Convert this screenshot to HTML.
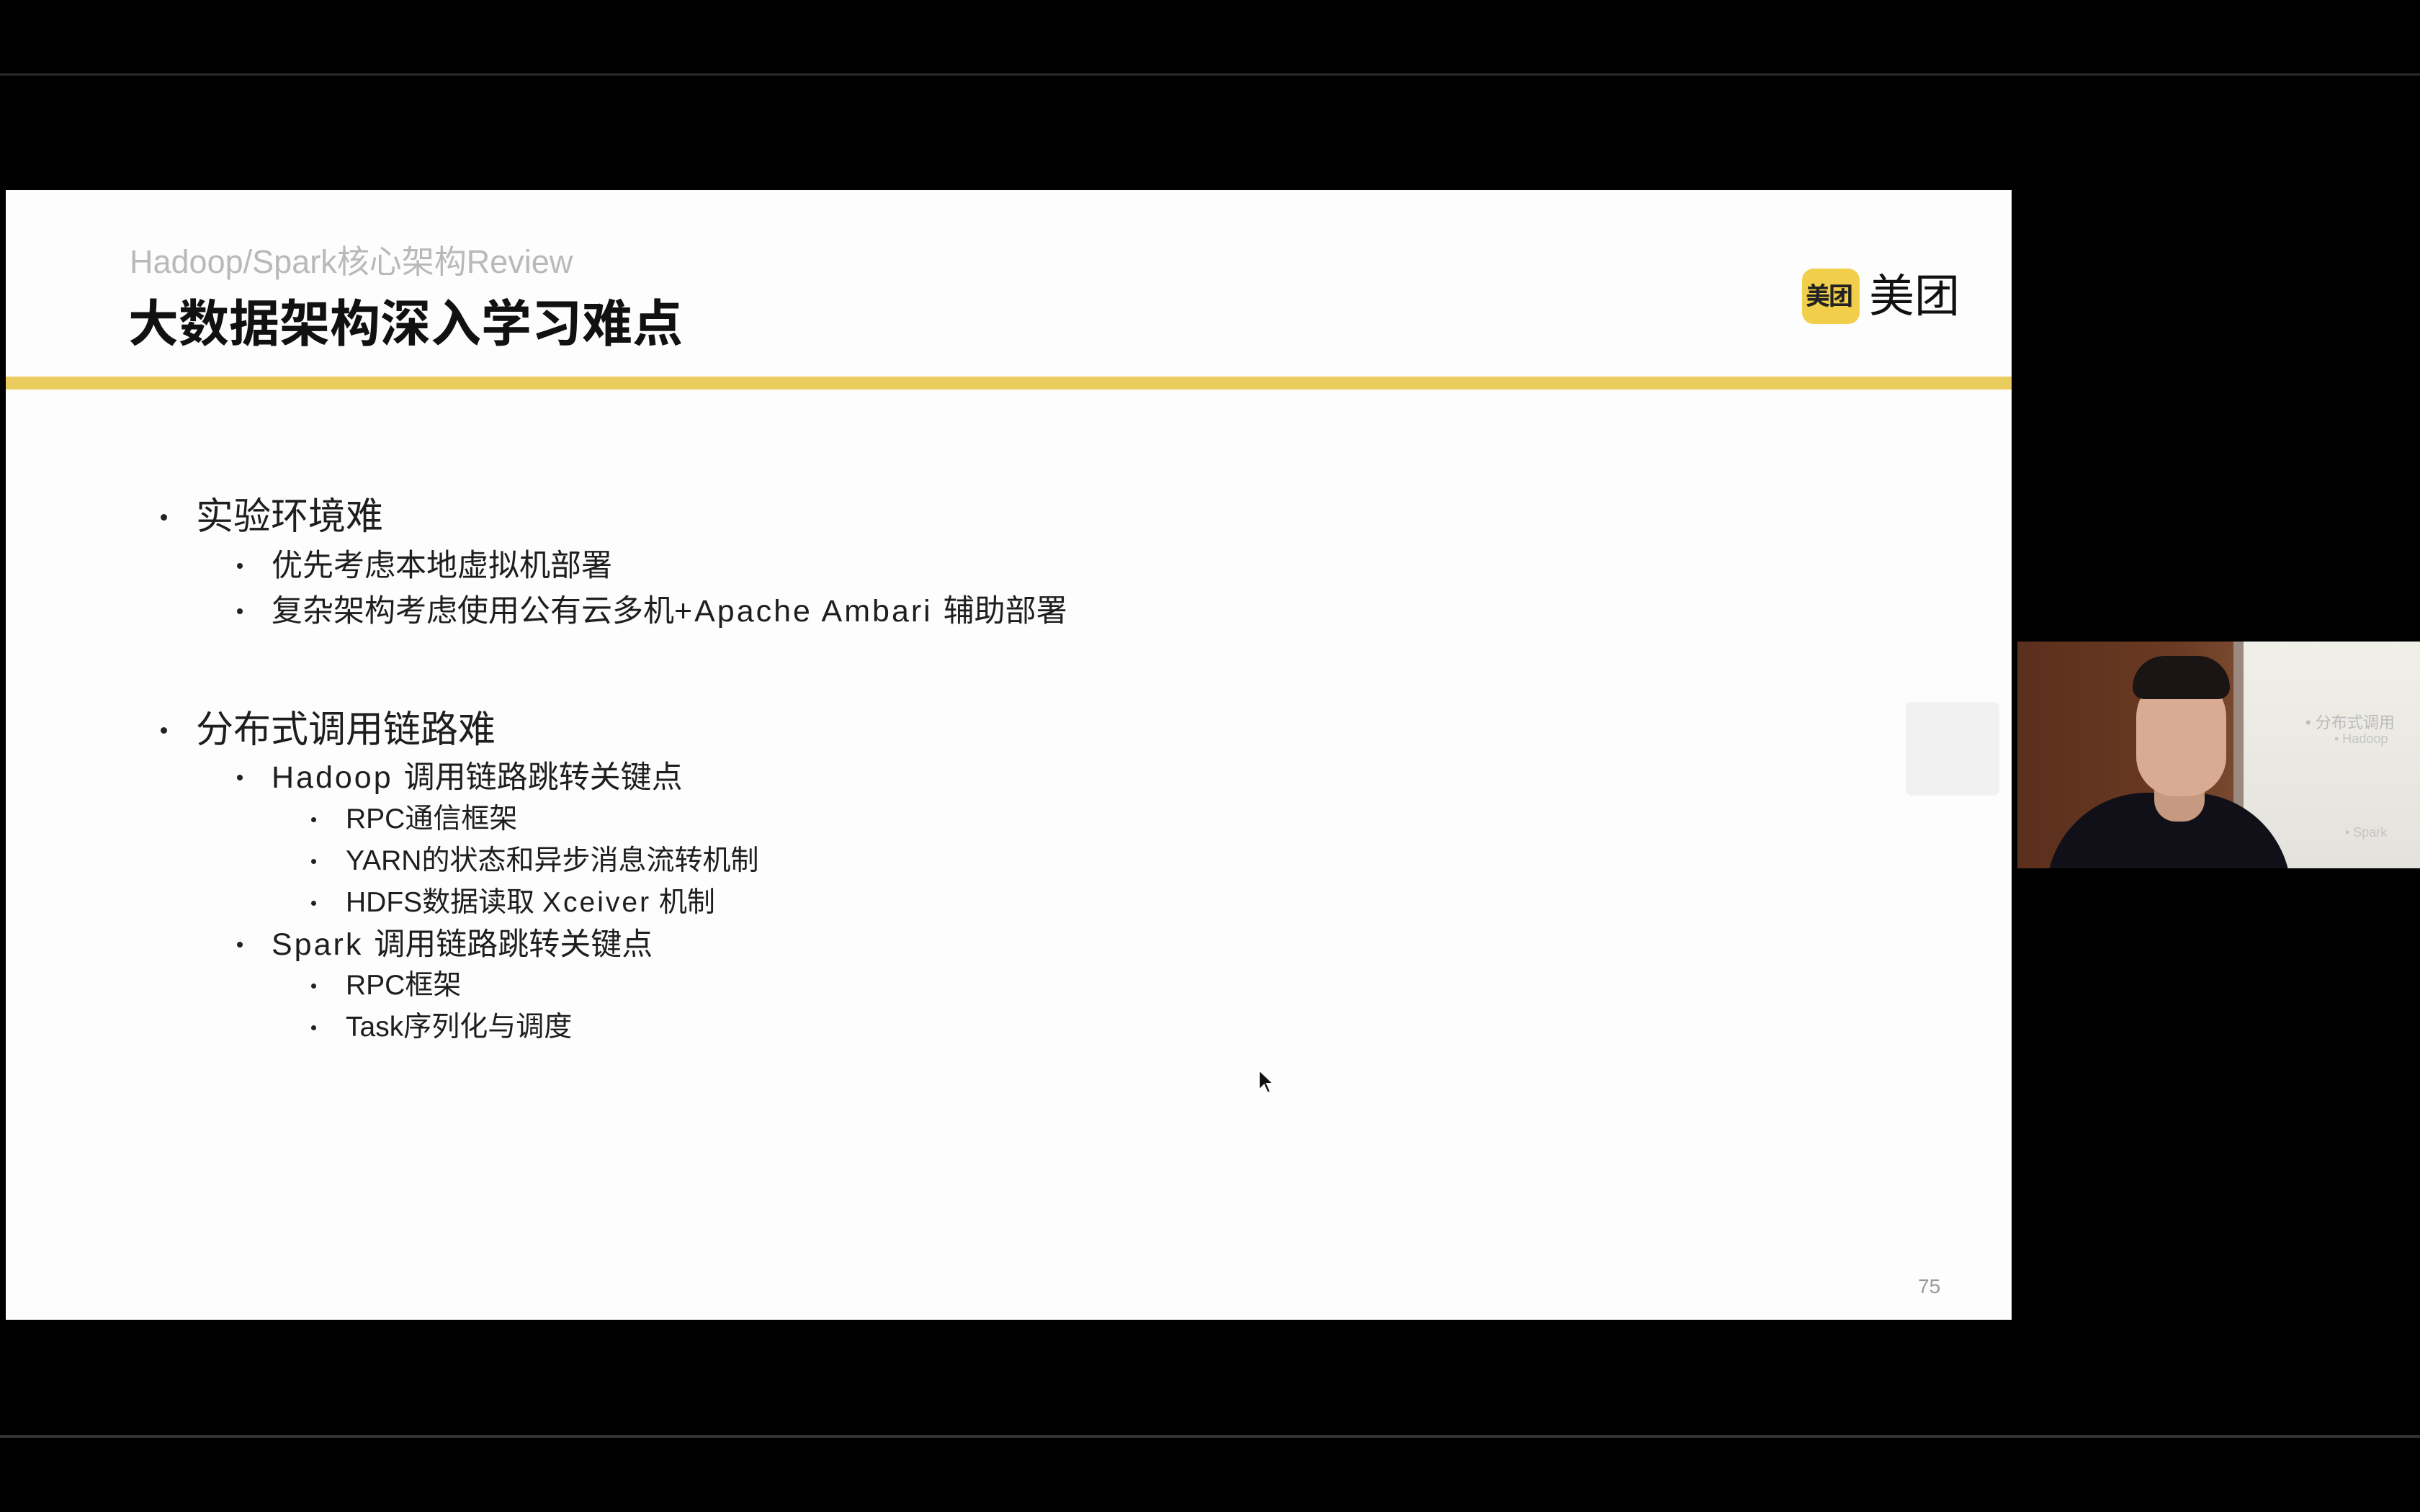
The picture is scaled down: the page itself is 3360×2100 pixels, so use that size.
<!DOCTYPE html>
<html><head><meta charset="utf-8">
<style>
html,body{margin:0;padding:0;background:#000;}
body{width:3360px;height:2100px;position:relative;overflow:hidden;font-family:"Liberation Sans","Noto Sans CJK SC",sans-serif;}
.abs{position:absolute;white-space:nowrap;}
.slide{position:absolute;left:8px;top:264px;width:2785px;height:1569px;background:#fdfdfd;}
.t{position:absolute;white-space:nowrap;color:#1e1e1e;font-family:"Liberation Sans","Noto Sans CJK SC",sans-serif;}
.l{letter-spacing:3px;}
.dot{position:absolute;border-radius:50%;background:#222;}
</style></head><body>
<div class="abs" style="left:0;top:102px;width:3360px;height:3px;background:#2a2a2a"></div>
<div class="abs" style="left:0;top:1993px;width:3360px;height:4px;background:#333"></div>
<div class="slide"></div>
<div class="t" style="left:180px;top:336px;font-size:45px;line-height:56px;color:#b9b9b9;">Hadoop/Spark核心架构Review</div>
<div class="t" style="left:178px;top:410px;font-size:70px;line-height:80px;font-weight:bold;color:#111;">大数据架构深入学习难点</div>
<div class="abs" style="left:8px;top:523px;width:2785px;height:18px;background:#e9cc5d"></div>
<div class="abs" style="left:2502px;top:373px;width:80px;height:77px;border-radius:16px;background:#f2cf4a;"></div>
<div class="t" style="left:2507px;top:393px;font-size:34px;line-height:38px;font-weight:bold;color:#222;letter-spacing:-2px">美团</div>
<div class="t" style="left:2595px;top:376px;font-size:63px;line-height:72px;color:#111;">美团</div>

<div class="dot" style="left:223px;top:714px;width:9px;height:9px"></div>
<div class="t" style="left:272px;top:688px;font-size:52px;line-height:60px;">实验环境难</div>
<div class="dot" style="left:329px;top:782px;width:8px;height:8px"></div>
<div class="t" style="left:377px;top:760px;font-size:43px;line-height:52px;">优先考虑本地虚拟机部署</div>
<div class="dot" style="left:329px;top:845px;width:8px;height:8px"></div>
<div class="t" style="left:377px;top:823px;font-size:43px;line-height:52px;">复杂架构考虑使用公有云多机<span class="l">+Apache Ambari </span>辅助部署</div>

<div class="dot" style="left:223px;top:1010px;width:9px;height:9px"></div>
<div class="t" style="left:272px;top:984px;font-size:52px;line-height:60px;">分布式调用链路难</div>
<div class="dot" style="left:329px;top:1076px;width:8px;height:8px"></div>
<div class="t" style="left:377px;top:1054px;font-size:43px;line-height:52px;"><span class="l">Hadoop </span>调用链路跳转关键点</div>
<div class="dot" style="left:432px;top:1135px;width:7px;height:7px"></div>
<div class="t" style="left:480px;top:1114px;font-size:39px;line-height:48px;">RPC通信框架</div>
<div class="dot" style="left:432px;top:1193px;width:7px;height:7px"></div>
<div class="t" style="left:480px;top:1172px;font-size:39px;line-height:48px;">YARN的状态和异步消息流转机制</div>
<div class="dot" style="left:432px;top:1251px;width:7px;height:7px"></div>
<div class="t" style="left:480px;top:1230px;font-size:39px;line-height:48px;">HDFS数据读取 <span class="l">Xceiver</span> 机制</div>
<div class="dot" style="left:329px;top:1308px;width:8px;height:8px"></div>
<div class="t" style="left:377px;top:1286px;font-size:43px;line-height:52px;"><span class="l">Spark </span>调用链路跳转关键点</div>
<div class="dot" style="left:432px;top:1366px;width:7px;height:7px"></div>
<div class="t" style="left:480px;top:1345px;font-size:39px;line-height:48px;">RPC框架</div>
<div class="dot" style="left:432px;top:1424px;width:7px;height:7px"></div>
<div class="t" style="left:480px;top:1403px;font-size:39px;line-height:48px;">Task序列化与调度</div>

<div class="t" style="left:2663px;top:1770px;font-size:28px;line-height:34px;color:#999;">75</div>
<div class="abs" style="left:2646px;top:975px;width:130px;height:130px;border-radius:8px;background:#f1f1f1"></div>
<svg class="abs" style="left:1746px;top:1484px" width="26" height="40" viewBox="0 0 13 20"><path d="M1 1 L1 15 L4.5 11.5 L7 17 L9 16 L6.5 10.5 L11 10.5 Z" fill="#111" stroke="#fff" stroke-width="1"/></svg>
<div class="abs" style="left:2801px;top:891px;width:559px;height:315px;overflow:hidden;background:linear-gradient(90deg,#5a2f1c 0%,#6b3a22 40%,#7a4a30 55%,#8a6a55 56%);">
  <div class="abs" style="left:310px;top:0;width:249px;height:315px;background:linear-gradient(180deg,#f0efe8,#e4e2dc);"></div>
  <div class="abs" style="left:300px;top:0;width:14px;height:315px;background:#9a8a80"></div>
  <div class="abs" style="left:40px;top:210px;width:340px;height:180px;border-radius:140px 140px 0 0;background:#111018;"></div>
  <div class="abs" style="left:190px;top:200px;width:70px;height:50px;background:#c69a80;border-radius:0 0 30px 30px"></div>
  <div class="abs" style="left:165px;top:45px;width:125px;height:170px;border-radius:60px 60px 55px 55px;background:#d9ab92;"></div>
  <div class="abs" style="left:160px;top:20px;width:135px;height:60px;border-radius:70px 70px 25px 25px;background:#1a1414;"></div>
  <div class="t" style="left:400px;top:95px;font-size:22px;color:#bbb;">• 分布式调用</div>
  <div class="t" style="left:440px;top:125px;font-size:18px;color:#c4c4c4;">• Hadoop</div>
  <div class="t" style="left:455px;top:255px;font-size:18px;color:#c4c4c4;">• Spark</div>
</div>
</body></html>
